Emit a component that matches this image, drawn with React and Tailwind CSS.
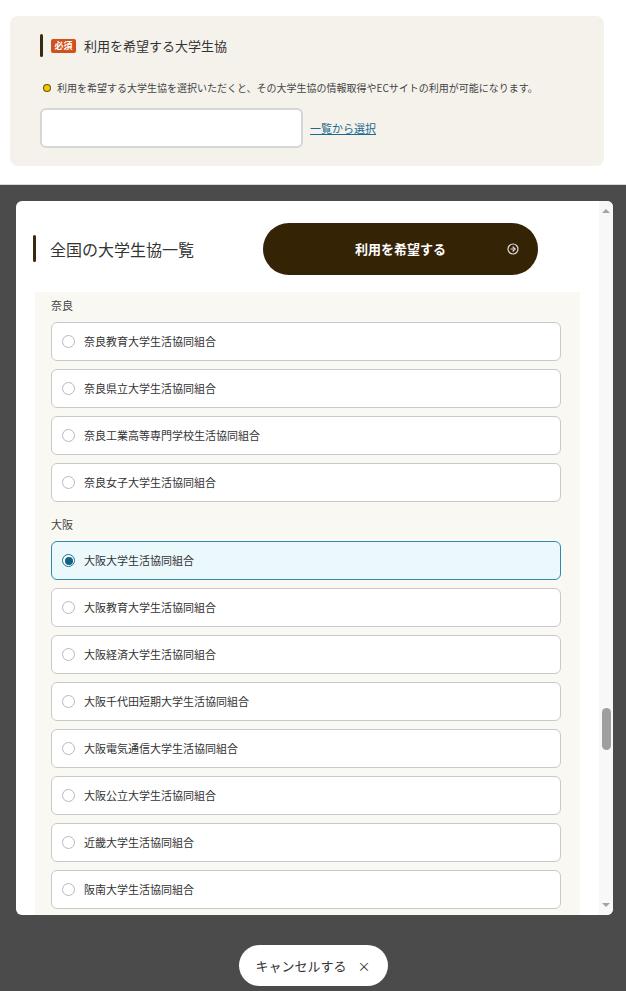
import React from "react";

const font = { fontFamily: '"Noto Sans CJK JP", "Noto Sans", sans-serif' };

const groups = [
  {
    name: "奈良",
    items: [
      "奈良教育大学生活協同組合",
      "奈良県立大学生活協同組合",
      "奈良工業高等専門学校生活協同組合",
      "奈良女子大学生活協同組合",
    ],
  },
  {
    name: "大阪",
    items: [
      "大阪大学生活協同組合",
      "大阪教育大学生活協同組合",
      "大阪経済大学生活協同組合",
      "大阪千代田短期大学生活協同組合",
      "大阪電気通信大学生活協同組合",
      "大阪公立大学生活協同組合",
      "近畿大学生活協同組合",
      "阪南大学生活協同組合",
    ],
  },
];

const selected = "大阪大学生活協同組合";

function Item({ label }) {
  const on = label === selected;
  return (
    <div
      className={
        "h-[39px] rounded-md border flex items-center pl-[10px] gap-[9px] " +
        (on ? "bg-[#ebf9fd] border-[#3089ae]" : "bg-white border-[#c9c9c9]")
      }
    >
      {on ? (
        <span className="w-[13px] h-[13px] rounded-full border border-[#1f6f92] flex items-center justify-center bg-white">
          <span className="w-[8px] h-[8px] rounded-full bg-[#0e6487]" />
        </span>
      ) : (
        <span className="w-[13px] h-[13px] rounded-full border border-[#b9b9b9] bg-white" />
      )}
      <span className="text-[11px] text-[#333] leading-none">{label}</span>
    </div>
  );
}

export default function App() {
  return (
    <div className="w-[626px] h-[991px] bg-white flex flex-col overflow-hidden" style={font}>
      {/* background form */}
      <div className="h-[185px] pt-4 px-[10px] border-b border-[#d8d8d8]">
        <div className="w-[594px] h-[150px] bg-[#f5f2ec] rounded-lg pl-[30px] pt-[18px]">
          <div className="flex items-center h-[23px]">
            <span className="w-[3px] h-[23px] bg-[#3a2a10] rounded-sm" />
            <span className="ml-2 w-[25px] h-[14px] bg-[#d1511d] rounded-[2px] text-white text-[9px] font-bold leading-none flex items-center justify-center">
              必須
            </span>
            <span className="ml-2 text-[13px] text-[#333]">利用を希望する大学生協</span>
          </div>
          <div className="flex items-center mt-[26px] ml-[4px] gap-[7px]">
            <span className="w-[6px] h-[6px] rounded-full bg-[#f2c500] ring-1 ring-[#6b5600]" />
            <span className="text-[10px] text-[#444] leading-none">
              利用を希望する大学生協を選択いただくと、その大学生協の情報取得やECサイトの利用が可能になります。
            </span>
          </div>
          <div className="flex items-center mt-[15px] gap-[7px]">
            <div className="w-[263px] h-[40px] bg-white rounded-md border-2 border-[#d6d6d6]" />
            <a className="text-[11px] text-[#1c6a8c] underline leading-none">一覧から選択</a>
          </div>
        </div>
      </div>

      {/* overlay */}
      <div className="flex-1 bg-[#4b4b4b] pt-4 pl-4 flex flex-col">
        <div className="w-[597px] h-[714px] bg-white rounded-md flex overflow-hidden">
          <div className="flex-1 flex flex-col">
            <div className="h-[91px] flex items-start pt-[22px] pl-[17px]">
              <div className="flex items-center h-[51px]">
                <span className="w-[3px] h-[27px] bg-[#3a2a10] rounded-sm" />
                <span className="ml-[14px] text-[16px] text-[#333]">全国の大学生協一覧</span>
              </div>
              <button className="ml-[69px] w-[275px] h-[52px] rounded-full bg-[#352306] text-white relative flex items-center justify-center">
                <span className="text-[13px] font-bold">利用を希望する</span>
                <svg
                  className="absolute right-[19px] top-1/2 -translate-y-1/2"
                  width="12"
                  height="12"
                  viewBox="0 0 24 24"
                  fill="none"
                  stroke="#ddd"
                  strokeWidth="2.4"
                  strokeLinecap="round"
                  strokeLinejoin="round"
                >
                  <circle cx="12" cy="12" r="10" />
                  <path d="M12 8l4 4-4 4" />
                  <path d="M8 12h8" />
                </svg>
              </button>
            </div>
            <div className="ml-[19px] w-[545px] flex-1 bg-[#faf8f3] pl-4 pr-[19px] pt-[5px] overflow-hidden">
              {groups.map((g, gi) => (
                <div key={g.name} className={gi > 0 ? "mt-[14px]" : ""}>
                  <div className="text-[11px] text-[#444] h-[16px] leading-[16px] mb-[9px]">{g.name}</div>
                  <div className="flex flex-col gap-2">
                    {g.items.map((it) => (
                      <Item key={it} label={it} />
                    ))}
                  </div>
                </div>
              ))}
            </div>
          </div>
          {/* scrollbar */}
          <div className="w-[14px] bg-[#f8f8f8] flex flex-col items-center pt-[8px] pb-[8px]">
            <span className="w-0 h-0 border-l-[4px] border-r-[4px] border-b-[4px] border-l-transparent border-r-transparent border-b-[#a3a3a3]" />
            <div className="flex-1 w-full flex flex-col items-center">
              <div className="h-[495px]" />
              <div className="w-[9px] h-[42px] rounded-full bg-[#9f9f9f]" />
            </div>
            <span className="w-0 h-0 border-l-[4px] border-r-[4px] border-t-[4px] border-l-transparent border-r-transparent border-t-[#a3a3a3]" />
          </div>
        </div>
        <div className="flex justify-center mt-[30px] pr-4">
          <button className="w-[149px] h-[41px] rounded-full bg-white flex items-center justify-center gap-[11px] text-[#333]">
            <span className="text-[13px]">キャンセルする</span>
            <span className="text-[13px] leading-none">×</span>
          </button>
        </div>
      </div>
    </div>
  );
}
